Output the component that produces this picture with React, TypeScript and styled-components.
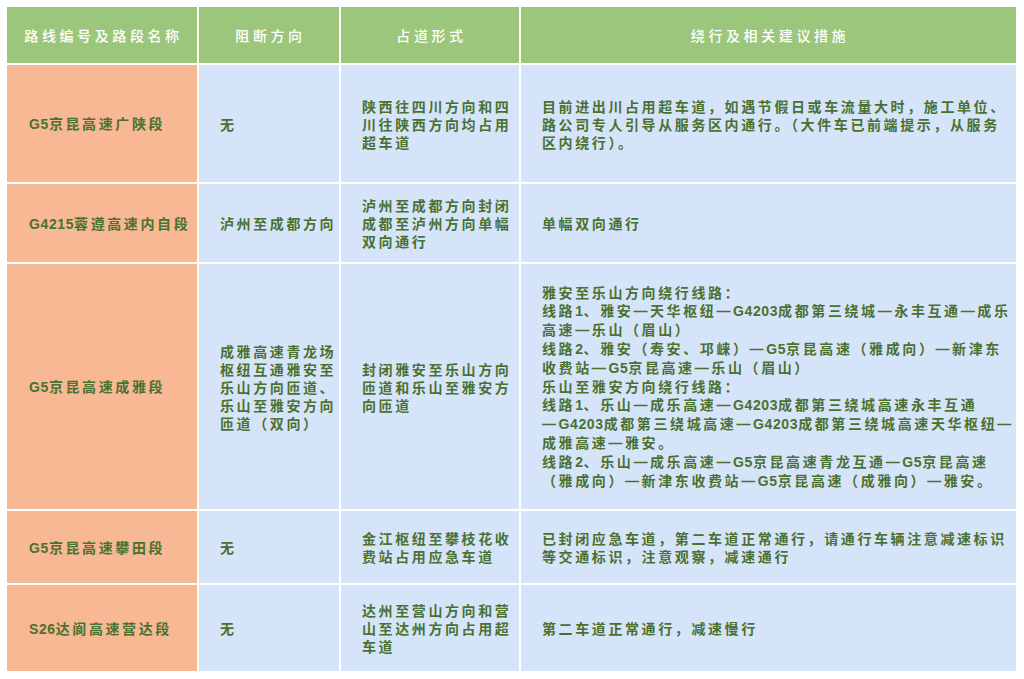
import React from "react";
import styled, { createGlobalStyle } from "styled-components";

const GlobalStyle = createGlobalStyle`
  html, body {
    margin: 0;
    padding: 0;
    background: #ffffff;
  }
  body {
    font-family: "Noto Sans CJK SC", "Noto Sans", sans-serif;
  }
`;

const Page = styled.div`
  width: 1024px;
  height: 679px;
  padding: 7px 8px 8px 7px;
  box-sizing: border-box;
  background: #ffffff;
`;

const Table = styled.div`
  display: grid;
  grid-template-columns: 190px 140px 178px 495px;
  grid-template-rows: 56px 117px 78px 245px 72px 86px;
  gap: 2px;
  width: 1009px;
  background: #ffffff;
`;

const HeadCell = styled.div`
  background: #9cc67b;
  color: #ffffff;
  display: flex;
  align-items: center;
  justify-content: center;
  font-size: 14px;
  font-weight: 500;
  letter-spacing: 3.6px;
  padding-left: 3px;
  white-space: nowrap;
`;

const Cell = styled.div<{ $tone: "orange" | "blue" }>`
  background: ${(p) => (p.$tone === "orange" ? "#f8b893" : "#d6e4fa")};
  color: #4a7130;
  display: flex;
  flex-direction: column;
  justify-content: center;
  padding-left: ${(p) => (p.$tone === "orange" ? "22px" : "21px")};
  font-size: 14px;
  font-weight: 700;
  line-height: 18px;
  letter-spacing: 2.6px;
`;

const Line = styled.span`
  display: block;
  white-space: nowrap;
`;

const Latin = styled.span`
  font-family: "Liberation Sans", "Noto Sans", sans-serif;
  letter-spacing: 0.6px;
`;

const Dash = styled.span`
  font-family: "Liberation Sans", sans-serif;
  letter-spacing: 2.6px;
`;

type Row = {
  name: string;
  block: string[];
  lane: string[];
  advice: string[];
};

const rows: Row[] = [
  {
    name: "G5京昆高速广陕段",
    block: ["无"],
    lane: ["陕西往四川方向和四", "川往陕西方向均占用", "超车道"],
    advice: [
      "目前进出川占用超车道，如遇节假日或车流量大时，施工单位、",
      "路公司专人引导从服务区内通行。（大件车已前端提示，从服务",
      "区内绕行）。",
    ],
  },
  {
    name: "G4215蓉遵高速内自段",
    block: ["泸州至成都方向"],
    lane: ["泸州至成都方向封闭", "成都至泸州方向单幅", "双向通行"],
    advice: ["单幅双向通行"],
  },
  {
    name: "G5京昆高速成雅段",
    block: ["成雅高速青龙场", "枢纽互通雅安至", "乐山方向匝道、", "乐山至雅安方向", "匝道（双向）"],
    lane: ["封闭雅安至乐山方向", "匝道和乐山至雅安方", "向匝道"],
    advice: [
      "雅安至乐山方向绕行线路：",
      "线路1、雅安—天华枢纽—G4203成都第三绕城—永丰互通—成乐",
      "高速—乐山（眉山）",
      "线路2、雅安（寿安、邛崃）—G5京昆高速（雅成向）—新津东",
      "收费站—G5京昆高速—乐山（眉山）",
      "乐山至雅安方向绕行线路：",
      "线路1、乐山—成乐高速—G4203成都第三绕城高速永丰互通",
      "—G4203成都第三绕城高速—G4203成都第三绕城高速天华枢纽—",
      "成雅高速—雅安。",
      "线路2、乐山—成乐高速—G5京昆高速青龙互通—G5京昆高速",
      "（雅成向）—新津东收费站—G5京昆高速（成雅向）—雅安。",
    ],
  },
  {
    name: "G5京昆高速攀田段",
    block: ["无"],
    lane: ["金江枢纽至攀枝花收", "费站占用应急车道"],
    advice: [
      "已封闭应急车道，第二车道正常通行，请通行车辆注意减速标识",
      "等交通标识，注意观察，减速通行",
    ],
  },
  {
    name: "S26达阆高速营达段",
    block: ["无"],
    lane: ["达州至营山方向和营", "山至达州方向占用超", "车道"],
    advice: ["第二车道正常通行，减速慢行"],
  },
];

const headers = ["路线编号及路段名称", "阻断方向", "占道形式", "绕行及相关建议措施"];

const Rich: React.FC<{ text: string }> = ({ text }) => {
  const parts = text.split(/([\x20-\x7E]+|—)/).filter((p) => p !== "");
  return (
    <>
      {parts.map((p, i) =>
        p === "—" ? (
          <Dash key={i}>{p}</Dash>
        ) : /^[\x20-\x7E]+$/.test(p) ? (
          <Latin key={i}>{p}</Latin>
        ) : (
          <React.Fragment key={i}>{p}</React.Fragment>
        )
      )}
    </>
  );
};

const Lines: React.FC<{ lines: string[] }> = ({ lines }) => (
  <>
    {lines.map((l, i) => (
      <Line key={i}>
        <Rich text={l} />
      </Line>
    ))}
  </>
);

export default function App() {
  return (
    <Page lang="zh-CN">
      <GlobalStyle />
      <Table>
        {headers.map((h) => (
          <HeadCell key={h}>{h}</HeadCell>
        ))}
        {rows.map((r) => (
          <React.Fragment key={r.name}>
            <Cell $tone="orange">
              <Lines lines={[r.name]} />
            </Cell>
            <Cell $tone="blue">
              <Lines lines={r.block} />
            </Cell>
            <Cell $tone="blue">
              <Lines lines={r.lane} />
            </Cell>
            <Cell $tone="blue">
              <Lines lines={r.advice} />
            </Cell>
          </React.Fragment>
        ))}
      </Table>
    </Page>
  );
}
